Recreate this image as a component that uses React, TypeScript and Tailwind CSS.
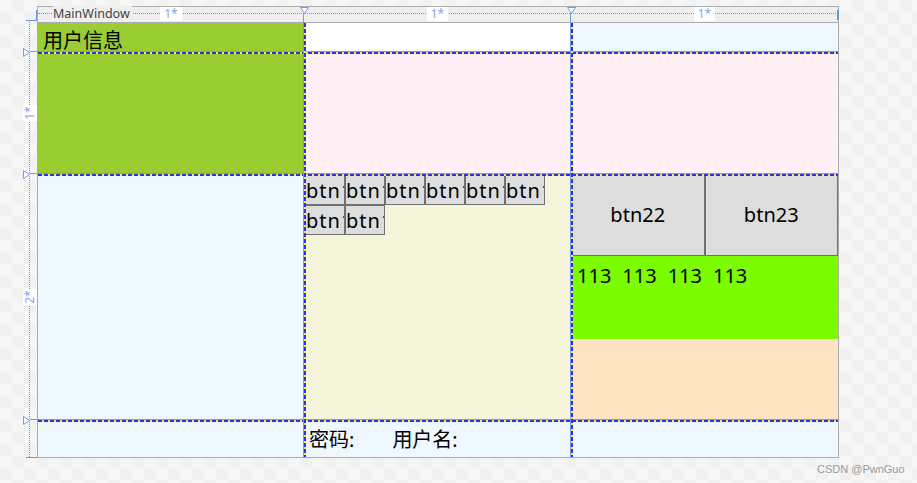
import React from 'react';

const font = "font-['Noto_Sans','Noto_Sans_CJK_SC',sans-serif]";

// designer adornment colours
const dashV =
  'bg-[repeating-linear-gradient(180deg,#2f2ff0_0_4px,#f2f23c_4px_6px)]';
const dashH =
  'bg-[repeating-linear-gradient(90deg,#2f2ff0_0_4px,#f2f23c_4px_6px)]';

const TriDown = ({ x }: { x: number }) => (
  <svg
    className="absolute top-[7px]"
    style={{ left: x - 4 }}
    width="9"
    height="7"
    viewBox="0 0 9 7"
  >
    <path d="M0.5 0.5h8L4.5 6.5z" fill="#fff" stroke="#6f9de6" strokeWidth="1" />
  </svg>
);

const TriRight = ({ y }: { y: number }) => (
  <svg
    className="absolute left-[23px]"
    style={{ top: y - 4 }}
    width="7"
    height="9"
    viewBox="0 0 7 9"
  >
    <path d="M0.5 0.5v8L6.5 4.5z" fill="#fff" stroke="#6f9de6" strokeWidth="1" />
  </svg>
);

const SmallBtn = ({ label }: { label: string }) => (
  <div className="w-[40px] h-[30px] border border-[#707070] bg-[#dddddd] flex items-center justify-start overflow-hidden whitespace-nowrap text-[20px] leading-[27px] text-black">
    <span className="tracking-[1px]">{label}</span>
  </div>
);

export default function App() {
  const small = ['btn11', 'btn12', 'btn13', 'btn14', 'btn15', 'btn16', 'btn17', 'btn18'];

  return (
    <div
      className={`relative w-[917px] h-[483px] overflow-hidden pl-[37px] pt-[6px] bg-[#f4f4f4] bg-[repeating-conic-gradient(#f1f1f1_0_25%,#f6f6f6_0_50%)] bg-[length:24px_24px] ${font}`}
    >
      {/* window */}
      <div className="w-[802px] border border-[#acacac] bg-[#efefef]">
        {/* title / column ruler */}
        <div className="relative h-[16px] border-b border-[#acacac] grid grid-cols-[266px_267px_267px]">
          <div className="absolute left-0 right-[2px] top-[6px] border-t border-dotted border-[#6d95d8]" />
          <div className="relative flex items-center">
            <span className="absolute left-[15px] top-[-1px] bg-[#efefef] pr-[2px] text-[12.5px] leading-[16px] text-[#3f3f3f]">
              MainWindow
            </span>
            <span className="mx-auto mt-[-1px] bg-white px-[4px] text-[12px] leading-[14px] text-[#7ea6ea] relative">
              1*
            </span>
          </div>
          <div className="relative flex items-center justify-center">
            <span className="mt-[-1px] bg-white px-[4px] text-[12px] leading-[14px] text-[#7ea6ea]">1*</span>
          </div>
          <div className="relative flex items-center justify-center">
            <span className="mt-[-1px] bg-white px-[4px] text-[12px] leading-[14px] text-[#7ea6ea]">1*</span>
          </div>
        </div>

        {/* content grid */}
        <div className="grid grid-cols-[266px_267px_267px] grid-rows-[29px_122px_246px_37px]">
          <div className="row-span-2 bg-[#9acd32] text-black">
            <div className="pl-[5px] pt-[3px] text-[20px] leading-[29px]">用户信息</div>
          </div>
          <div className="bg-white" />
          <div className="bg-[#f0f8ff]" />
          <div className="bg-[#fff0f5]" />
          <div className="bg-[#fff0f5]" />

          <div className="bg-[#f0f8ff]" />
          <div className="bg-[#f5f5dc] pl-[1px] pt-[1px]">
            <div className="flex flex-wrap content-start">
              {small.map((s) => (
                <SmallBtn key={s} label={s} />
              ))}
            </div>
          </div>
          <div className="grid grid-rows-[82px_83px_81px]">
            <div className="flex">
              <div className="flex-1 border border-[#707070] bg-[#dddddd] flex items-center justify-center text-[20px] text-black">
                btn22
              </div>
              <div className="flex-1 border border-[#707070] bg-[#dddddd] flex items-center justify-center text-[20px] text-black">
                btn23
              </div>
            </div>
            <div className="bg-[#7cfc00] flex gap-[11px] pl-[6px] pt-[6px] text-[20px] leading-[27px] text-black">
              <span>113</span>
              <span>113</span>
              <span>113</span>
              <span>113</span>
            </div>
            <div className="bg-[#ffe4c4]" />
          </div>

          <div className="bg-[#f0f8ff]" />
          <div className="bg-[#f0f8ff] flex items-center pl-[5px] pt-[2px] text-[20px] leading-[29px] text-black">
            <span>密码:</span>
            <span className="ml-[38px]">用户名:</span>
          </div>
          <div className="bg-[#f0f8ff]" />
        </div>
      </div>

      {/* row ruler (left) */}
      <div className="absolute left-[29px] top-[20px] h-[437px] border-l border-dotted border-[#6d95d8]" />
      <div className="absolute left-[36px] top-[10px] w-px h-[11px] bg-[#6d95d8]" />
      <div className="absolute left-[26px] top-[20px] w-[11px] h-px bg-[#6d95d8]" />
      <div className="absolute left-[26px] top-[457px] w-[11px] h-px bg-[#6d95d8]" />
      <div className="absolute left-[837px] top-[10px] w-[2px] h-[10px] bg-[#6d95d8]" />

      <div className="absolute left-[23px] top-[105px] w-[14px] h-[16px] bg-white flex items-center justify-center">
        <span className="-rotate-90 text-[12px] leading-[12px] text-[#7ea6ea]">1*</span>
      </div>
      <div className="absolute left-[23px] top-[289px] w-[14px] h-[16px] bg-white flex items-center justify-center">
        <span className="-rotate-90 text-[12px] leading-[12px] text-[#7ea6ea]">2*</span>
      </div>

      {/* grid lines: rows */}
      {[52, 174, 420].map((y) => (
        <React.Fragment key={y}>
          <TriRight y={y} />
          <div className="absolute left-[30px] w-[808px] h-px bg-[#6f9de6]" style={{ top: y - 1 }} />
          <div className={`absolute left-[38px] w-[800px] h-[2px] ${dashH}`} style={{ top: y }} />
        </React.Fragment>
      ))}

      {/* grid lines: columns */}
      {[304, 571].map((x) => (
        <React.Fragment key={x}>
          <TriDown x={x} />
          <div className="absolute top-[13px] h-[444px] w-px bg-[#6f9de6]" style={{ left: x - 1 }} />
          <div className={`absolute top-[23px] h-[434px] w-[2px] ${dashV}`} style={{ left: x }} />
        </React.Fragment>
      ))}

      <div className="absolute left-[817px] top-[461px] text-[11px] leading-[16px] text-[#9a9a9a] font-['Liberation_Sans',sans-serif]">
        CSDN @PwnGuo
      </div>
    </div>
  );
}
